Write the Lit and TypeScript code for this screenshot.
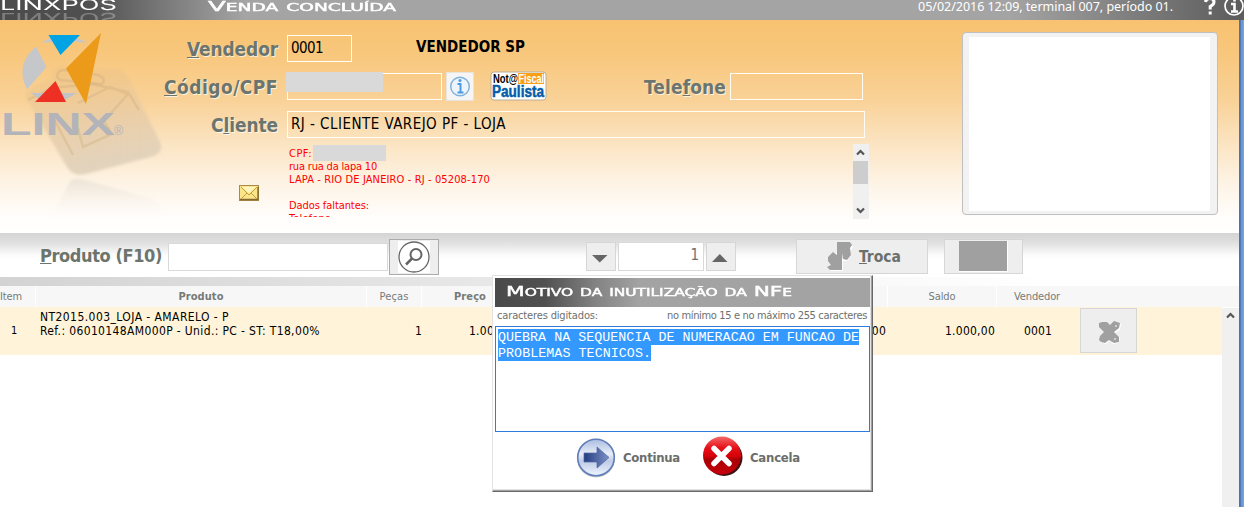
import { LitElement, html, css, svg } from "lit";
import { customElement, property } from "lit/decorators.js";

/** Spreads its text over a given width, by tracking or by stretching the glyphs. */
@customElement("fit-text")
class FitText extends LitElement {
  @property({ type: Number }) w = 0;
  @property({ type: Boolean }) stretch = false;
  static styles = css`
    :host { display: inline-block; white-space: nowrap; flex: none; }
    span { display: inline-block; transform-origin: 0 50%; }
  `;
  render() {
    return html`<span><slot></slot></span>`;
  }
  firstUpdated() {
    const s = this.renderRoot.querySelector("span") as HTMLElement;
    const natural = s.getBoundingClientRect().width;
    const n = (this.textContent || "").length;
    this.style.width = this.w + "px";
    if (this.stretch) s.style.transform = `scaleX(${this.w / natural})`;
    else s.style.letterSpacing = (this.w - natural) / n + "px";
  }
}

const chevron = (up: boolean) => svg`<path d=${up ? "M5 9.5 8.5 6 12 9.5" : "M5 6.5 8.5 10 12 6.5"} fill="none" stroke="#555" stroke-width="2.2"/>`;

const logo = html`<svg class="logo" width="163" height="213" viewBox="0 20 163 213">
  <defs>
    <linearGradient id="pad" x1="0" y1="0" x2="0.2" y2="1">
      <stop offset="0" stop-color="#eebf7d" stop-opacity=".35"/>
      <stop offset=".55" stop-color="#e8cba4" stop-opacity=".8"/>
      <stop offset="1" stop-color="#e2d3bd"/>
    </linearGradient>
    <linearGradient id="mirror" x1="0" y1="0" x2="0" y2="1">
      <stop offset="0" stop-color="#e9dfd2" stop-opacity=".8"/>
      <stop offset="1" stop-color="#fff" stop-opacity="0"/>
    </linearGradient>
    <filter id="soft"><feGaussianBlur stdDeviation="1.4"/></filter>
  </defs>
  <path filter="url(#soft)" fill="url(#mirror)" d="M70 181Q74 178 81 179L150 198Q163 203 161 215L155 224H48Z"/>
  <path filter="url(#soft)" fill="url(#pad)" d="M26 98Q24 92 33 87L52 78Q50 68 60 66L72 68 112 69Q122 68 127 75L160 142Q164 151 154 156L86 174Q73 177 67 167Z"/>
  <g fill="none" stroke="#cfae80" stroke-opacity=".4" stroke-width="2.5">
    <path d="M28 100 52 88 92 84 128 92 139 110M78 103 110 87 128 94 104 121 112 134 83 147 78 128M52 115 73 155"/>
    <path d="M57 77Q57 70 65 70L98 75Q107 79 102 84L60 80Z"/>
  </g>
  <path d="M101 33 66 68.500 86 104Z" fill="#eb9a1a"/>
  <path d="M36 46.500 46.500 67 27 89.500C18 72 23 58 36 46.500Z" fill="#c6c7ca"/>
  <path d="M31 93H77L65 100H40Z" fill="#c2c3c7"/>
  <path d="M55.500 81 66 102H35Z" fill="#ee3024"/>
  <path d="M42 43Q46 39 51 38H76Q82 39 87 43L74 41.500H54Z" fill="#c6c6c9"/>
  <path d="M48.500 35H80L60.500 55Z" fill="#00a4e4"/>
  <text x="1" y="135" class="brand" textLength="114" lengthAdjust="spacingAndGlyphs">LINX</text>
  <text x="114" y="135" class="reg">®</text>
</svg>`;

@customElement("app-root")
class AppRoot extends LitElement {
  static styles = css`
    :host { display: block; width: 1244px; height: 507px; overflow: hidden; position: relative; background: #fff;
      font: 14px "DejaVu Sans Condensed", "DejaVu Sans", sans-serif; font-stretch: condensed; color: #000; }
    * { box-sizing: border-box; }
    svg { display: block; flex: none; }
    b, .b { font-weight: 700; }
    u { text-decoration: underline; text-decoration-thickness: 1px; text-underline-offset: 1px; text-decoration-skip-ink: none; }
    header { height: 20px; display: flex; color: #fff; overflow: hidden;
      background: linear-gradient(90deg, #4b4b4b 0, #505050 90px, #777 160px, #a4a4a4 245px, #a4a4a4 1010px, #6c6c6c 1190px, #5c5c5c 1244px); }
    .app { width: 208px; font: 400 15px/12px Inter, sans-serif; font-stretch: normal; height: 20px; }
    .app fit-text { display: block; height: 12px; margin-top: -1px; }
    .app .mirror { opacity: .28; transform: scaleY(-1); margin: 1px 0 0; }
    .caps { font-family: "DejaVu Sans", sans-serif; font-stretch: normal; font-variant: small-caps; font-weight: 400; -webkit-text-stroke: .45px #fff; }
    .title { font-size: 14px; line-height: 12px; width: 710px; height: 13px; }
    .when { width: 286px; font: 12.500px/14px "Noto Sans", sans-serif; }
    .body { display: flex; height: 487px; }
    .page { width: 1239px; height: 487px; }
    .edge { width: 5px; background: linear-gradient(90deg, #4874b1 0 1px, #4e7bb8 1px 2px, #6c97d2 2px 4px, #7ba3da 4px); }
    .customer { height: 213px; display: flex;
      background: linear-gradient(#f8c270 0, #f8c87f 18%, #f9d298 38%, #fbe3c0 57%, #fdf3e4 76%, #fffdfa 92%, #fff 100%); }
    .brand { font: 700 31.500px "Liberation Sans", sans-serif; fill: #b3b4ba; }
    .reg { font: 12.500px "Liberation Sans", sans-serif; fill: #b3b4ba; }
    .form { width: 799px; padding-top: 15px; }
    .row { display: flex; height: 27px; margin-bottom: 11px; align-items: flex-start; }
    .row.tight { margin-bottom: 6px; }
    .label { width: 115px; text-align: right; font-size: 19px; font-weight: 700; line-height: 28px; color: #6b756d; text-shadow: 1px 1px 0 rgba(255,255,255,.75); }
    .field { height: 27px; border: 1px solid #fffdf4; margin-left: 9px; line-height: 25px; padding-left: 3px; font-size: 15px; }
    .seller { width: 65px; } .code { width: 155px; padding: 0; } .phone { width: 133px; margin-left: 4px; } .client { width: 578px; }
    .redact { display: block; background: #d9d9d9; }
    .code .redact { width: 97px; height: 20px; margin: -2px 0 0 -2px; }
    .name { margin-left: 64px; font-weight: 700; line-height: 24px; font-size: 15px; }
    .info { margin: -1px 0 0 4px; } .nota { margin: -2px 0 0 16px; }
    .tel { width: 82px; margin-left: 97px; }
    .nf { font: 700 12px "Liberation Sans", sans-serif; }
    .nf.big { font-size: 16px; }
    .addr { display: flex; height: 74px; }
    .mail { width: 124px; padding: 41px 0 0 76px; }
    .lines { width: 566px; height: 73px; padding: 3px 0 0 2px; overflow: hidden; color: #f00; font-size: 11px; line-height: 13px; }
    .line { height: 13px; display: flex; }
    .line .redact { width: 73px; height: 16px; margin: -2px 0 0 1px; }
    .photo { width: 256px; height: 183px; margin-top: 12px; border: 1px solid #bfbfbf; border-radius: 4px; background: #f2f2f2; padding: 4px 7px 3px 6px; }
    .photo div { height: 100%; background: #fff; }
    .tools { height: 44px; display: flex; align-items: flex-start; padding: 6px 0 0 40px; background: linear-gradient(#d4d4d4 0, #dedede 20%, #fbfbfb 50%, #fff 60%); color: #6b756d; }
    .find { font-size: 18px; font-weight: 700; line-height: 34px; width: 128px; }
    .input { height: 28px; border: 1px solid #d9d9d9; background: #fff; }
    .search { width: 220px; margin-top: 4px; }
    .btn { border: 1px solid #d6d6d6; background: #eee; display: flex; }
    .glass { width: 50px; height: 36px; border-color: #ababab; margin: 0 0 0 1px; padding: 1px 0 0 8px; }
    .step { width: 30px; height: 29px; margin-top: 3px; padding: 11px 0 0 5px; }
    .down { margin-left: 147px; }
    .qty { width: 86px; height: 29px; margin: 3px 2px 0; text-align: right; padding-right: 4px; line-height: 25px; font-size: 15px; color: #707070; }
    .swap { width: 132px; height: 35px; margin-left: 60px; padding: 1px 0 0 30px; font-size: 15.500px; font-weight: 700; line-height: 32px; color: #6c706d; }
    .swap fit-text { margin-left: 6px; }
    .blank { width: 79px; height: 35px; margin-left: 16px; padding: 1px 14px; }
    .blank i { width: 49px; height: 31px; background: #a0a0a0; border: solid #fff; border-width: 0 1px 1px 0; }
    .band { height: 9px; background: linear-gradient(90deg, #d3d3d3, #e7e7e7 480px, #f9f9f9 860px, #fff 1050px); }
    .cols { display: grid; height: 21px; grid-template-columns: 36px 331px 55px 466px 109px 242px; background: #f7f7f7; color: #767b77; font-size: 11px; line-height: 21px; text-align: center; }
    .cols > div { border-right: 1px solid #fff; }
    .cols > div:last-child { border: 0; }
    .cols .l { text-align: left; } .cols .price { text-align: left; padding-left: 32px; }
    .cols .last { text-align: left; padding-left: 17px; }
    .list { display: flex; height: 200px; }
    .item { display: grid; grid-template-columns: 40px 365px 64px 50px 367px 109px 85px 142px; width: 1222px; height: 48px; background: #fff4d9; font-size: 12px; }
    .item > div { line-height: 14px; padding-top: 17px; }
    .item .desc { padding-top: 3px; }
    .item .n { padding-left: 11px; font-size: 11px; }
    .item .pc { padding-left: 10px; }
    .item .r { text-align: right; }
    .item .code2 { padding-left: 29px; }
    .item .act { width: 57px; height: 45px; padding: 12px 0 0 18px; margin: 1px 0 0 0; }
    .bar { width: 17px; background: #f0f0f0; border-top: 1px solid #fff; }
    .dialog { position: absolute; left: 492px; top: 275px; width: 381px; height: 217px; background: #fff; border: 1px solid #e3e3e3; border-right-color: #696969; border-bottom-color: #696969; box-shadow: inset -1px -1px #a0a0a0, inset -2px -2px #e3e3e3; padding: 2px 0 0 2px; }
    .dtitle { width: 375px; height: 29px; padding-left: 11px; color: #fff; font-size: 14px; line-height: 27px; background: linear-gradient(90deg, #4a4a4a 0, #505050 50px, #828282 100px, #a3a3a3 145px); }
    .hint { display: flex; justify-content: space-between; width: 375px; height: 19px; padding: 0 3px 0 2px; color: #6d706e; font-size: 11px; line-height: 17px; }
    .area { width: 375px; height: 106px; border: 1px solid #2f7cdc; padding: 2px; font: 13.333px/18px "Liberation Mono", monospace; color: #fff; }
    .area div { height: 16px; }
    .area span { display: inline-block; height: 16px; background: #39f; }
    .acts { display: flex; padding: 4px 0 0 81px; color: #6b6e6b; font-weight: 700; font-size: 13px; line-height: 43px; }
    .acts svg + fit-text { margin-left: 6px; }
    .acts .x { margin-left: 22px; }
  `;

  render() {
    return html`
      <header>
        <div class="app"><fit-text stretch w="117">LINXPOS</fit-text><fit-text class="mirror" stretch w="117">LINXPOS</fit-text></div>
        <div class="title caps"><fit-text stretch w="188">Venda concluída</fit-text></div>
        <div class="when"><fit-text w="255">05/02/2016 12:09, terminal 007, período 01.</fit-text></div>
        <svg width="40" height="20" viewBox="1204 0 40 20" fill="none" stroke="#fff">
          <path d="M1205.500 2Q1206-1.500 1210-1.500 1214-1.500 1214 2 1214 4.500 1210.200 6.500V9.500" stroke-width="3"/>
          <path d="M1208.700 11.500h3v3h-3z" fill="#fff" stroke="none"/>
          <circle cx="1234" cy="6" r="9" stroke-width="1.700"/>
          <path d="M1231 4H1234.500V11M1231 11.500H1238M1234.500-1V1.500" stroke-width="2.600"/>
        </svg>
      </header>
      <div class="body">
        <div class="page">
          <section class="customer">
            ${logo}
            <div class="form">
              <div class="row">
                <div class="label"><fit-text w="91"><u>V</u>endedor</fit-text></div>
                <div class="field seller"><fit-text w="32">0001</fit-text></div>
                <div class="name"><fit-text w="109">VENDEDOR SP</fit-text></div>
              </div>
              <div class="row">
                <div class="label"><fit-text w="114"><u>C</u>ódigo/CPF</fit-text></div>
                <div class="field code"><span class="redact"></span></div>
                <svg class="info" width="28" height="29"><path d="M0 0H28V29H0Z" fill="#e9e4dc"/><rect x="1" y="1" width="26" height="27" rx="2" fill="#f5f5f6"/><circle cx="14" cy="14.500" r="9.300" fill="#edf4fb" stroke="#80b3dc" stroke-width="1.500"/><path d="M11.500 12H14.500V20M11.500 20.500H17.500" fill="none" stroke="#4c9be0" stroke-width="2"/><circle cx="14" cy="8.500" r="1.500" fill="#4c9be0"/></svg>
                <svg class="nota" width="57" height="30" viewBox="0 0 57 30"><rect x="1" y="1" width="55" height="28" rx="3" fill="#fff" stroke="#b8ad9b"/><rect x="28" y="2" width="26" height="11" fill="#f8a018"/>
                  <text class="nf" x="3" y="12" textLength="25" lengthAdjust="spacingAndGlyphs">Not@</text><text class="nf" x="28.500" y="12" textLength="25.500" lengthAdjust="spacingAndGlyphs" fill="#fff">Fiscal</text>
                  <text class="nf big" x="2" y="25.500" textLength="52" lengthAdjust="spacingAndGlyphs" fill="#075ca8" stroke="#075ca8" stroke-width=".5">Paulista</text></svg>
                <div class="label tel"><fit-text w="82">Tele<u>f</u>one</fit-text></div>
                <div class="field phone"></div>
              </div>
              <div class="row tight">
                <div class="label"><fit-text w="67">C<u>l</u>iente</fit-text></div>
                <div class="field client"><fit-text w="215">RJ - CLIENTE VAREJO PF - LOJA</fit-text></div>
              </div>
              <div class="addr">
                <div class="mail"><svg width="20" height="16"><rect x=".5" y=".5" width="19" height="15" fill="#fbe58b" stroke="#a98a49"/><path d="M1 14.500H19V2" fill="none" stroke="#85692f" stroke-width="1.400"/><path d="M2 2 10 10 18 2M2 14 8 8M18 14 12 8" fill="none" stroke="#c79f3f"/><path d="M3 2H17L10 8Z" fill="#fff6bd"/></svg></div>
                <div class="lines">
                  <div class="line"><fit-text w="23">CPF:</fit-text><span class="redact"></span></div>
                  <div class="line"><fit-text w="88">rua rua da lapa 10</fit-text></div>
                  <div class="line"><fit-text w="201">LAPA - RIO DE JANEIRO - RJ - 05208-170</fit-text></div>
                  <div class="line"></div>
                  <div class="line"><fit-text w="80">Dados faltantes:</fit-text></div>
                  <div class="line"><fit-text w="42">Telefone</fit-text></div>
                </div>
                <svg width="16" height="75"><path d="M0 0H16V75H0Z" fill="#f0f0f0"/><path d="M0 17H15V40H0Z" fill="#cdcdcd"/><g transform="translate(-1 1)">${chevron(true)}</g><g transform="translate(-1 58)">${chevron(false)}</g></svg>
              </div>
            </div>
            <div class="photo"><div></div></div>
          </section>
          <section class="tools">
            <div class="find"><fit-text w="122"><u>P</u>roduto (F10)</fit-text></div>
            <div class="input search"></div>
            <div class="btn glass"><svg width="32" height="32"><path d="M0 0H32V32H0Z" fill="#fff"/><circle cx="16" cy="16" r="15" fill="none" stroke="#646464" stroke-width="1.300"/><circle cx="18" cy="13.500" r="5.500" fill="none" stroke="#646464" stroke-width="2"/><path d="M14 17.500 8 23.500" stroke="#646464" stroke-width="2.500"/></svg></div>
            <div class="btn step down"><svg width="16" height="9"><path d="M0 1H15.500L7.750 8.500Z" fill="#666"/></svg></div>
            <div class="input qty">1</div>
            <div class="btn step"><svg width="16" height="9"><path d="M0 8H15.500L7.750 0Z" fill="#666"/></svg></div>
            <div class="btn swap"><svg width="26" height="31"><path d="M11 1H24V4L26 6 24 9V15L20 20H16V30H4L1 27V26H5V24L2 21V17L6 12H11Z" fill="#fff"/><path d="M10 1H23L25 4 23 7 24 14 20 19 16 18 15 12V29H3L0 26 4 24 1 20V16L6 11 10 14Z" fill="#a0a0a0"/></svg><fit-text w="42"><u>T</u>roca</fit-text></div>
            <div class="btn blank"><i></i></div>
          </section>
          <div class="band"></div>
          <div class="cols">
            <div class="l"><fit-text w="22">Item</fit-text></div>
            <div><fit-text class="b" w="45">Produto</fit-text></div>
            <div><fit-text w="29">Peças</fit-text></div>
            <div class="price"><fit-text class="b" w="32">Preço</fit-text></div>
            <div><fit-text w="27">Saldo</fit-text></div>
            <div class="last"><fit-text w="46">Vendedor</fit-text></div>
          </div>
          <div class="list">
            <div class="item">
              <div class="n">1</div>
              <div class="desc"><fit-text w="189">NT2015.003_LOJA - AMARELO - P</fit-text><br /><fit-text w="280">Ref.: 06010148AM000P - Unid.: PC - ST: T18,00%</fit-text></div>
              <div class="pc">1</div>
              <div><fit-text w="50">1.000,00</fit-text></div>
              <div class="r"><fit-text w="50">1.000,00</fit-text></div>
              <div class="r"><fit-text w="50">1.000,00</fit-text></div>
              <div class="code2"><fit-text w="28">0001</fit-text></div>
              <div class="btn act"><svg width="22" height="23"><path d="M1 2 5 1 12 5 17 1 22 3 21 9 16 12 21 17 20 22 14 23 11 19 7 23 1 21 1 17 6 11 1 7Z" fill="#fff"/><path d="M0 2 3 1 8 1 11 4 15 0 18 1 21 2 20 7 15 11 20 16 20 21 15 22 10 19 6 22 2 21 0 19 1 15 5 11 0 6Z" fill="#a0a0a0"/><path d="M17 4v2M16 17v2" stroke="#fff"/></svg></div>
            </div>
            <div class="bar"><svg width="16" height="17">${chevron(true)}</svg></div>
          </div>
        </div>
        <div class="edge"></div>
      </div>
      <div class="dialog">
        <div class="dtitle caps"><fit-text stretch w="286">Motivo da inutilização da NFe</fit-text></div>
        <div class="hint"><fit-text w="101">caracteres digitados:</fit-text><fit-text w="200">no mínimo 15 e no máximo 255 caracteres</fit-text></div>
        <div class="area">
          <div><span><fit-text w="361">QUEBRA NA SEQUENCIA DE NUMERACAO EM FUNCAO DE</fit-text></span></div>
          <div><span><fit-text w="153">PROBLEMAS TECNICOS.</fit-text></span></div>
        </div>
        <div class="acts">
          <svg width="41" height="42"><defs><linearGradient id="disc" x1="0" y1="0" x2="0" y2="1"><stop offset="0" stop-color="#a9bce0"/><stop offset=".4" stop-color="#e8edf7"/><stop offset=".6" stop-color="#bfcbe6"/><stop offset="1" stop-color="#eef6ff"/></linearGradient><linearGradient id="arrow"><stop offset="0" stop-color="#243e82"/><stop offset="1" stop-color="#7d91c6"/></linearGradient></defs>
            <circle cx="20" cy="22.500" r="19" fill="#c8c8c8"/><circle cx="20" cy="21.500" r="18.300" fill="url(#disc)" stroke="#5f7db8" stroke-width="1.600"/><path d="M8 17H21V11L33 21.500 21 32V26H8Z" fill="url(#arrow)" stroke="#4f68a4" stroke-width=".7"/></svg>
          <fit-text w="57">Continua</fit-text>
          <svg class="x" width="42" height="42"><defs><linearGradient id="red" x1="0" y1="0" x2="0" y2="1"><stop offset="0" stop-color="#f36a6a"/><stop offset=".3" stop-color="#e61018"/><stop offset=".52" stop-color="#d60008"/><stop offset=".6" stop-color="#a80006"/><stop offset="1" stop-color="#c8000c"/></linearGradient></defs>
            <circle cx="22" cy="21.500" r="18.500" fill="#3c1414"/><circle cx="20" cy="19.500" r="19" fill="url(#red)"/><path d="M12 12.500 27 27.500M27 12.500 12 27.500" stroke="#fff" stroke-width="5.500" stroke-linecap="round"/></svg>
          <fit-text w="50">Cancela</fit-text>
        </div>
      </div>
    `;
  }
}
